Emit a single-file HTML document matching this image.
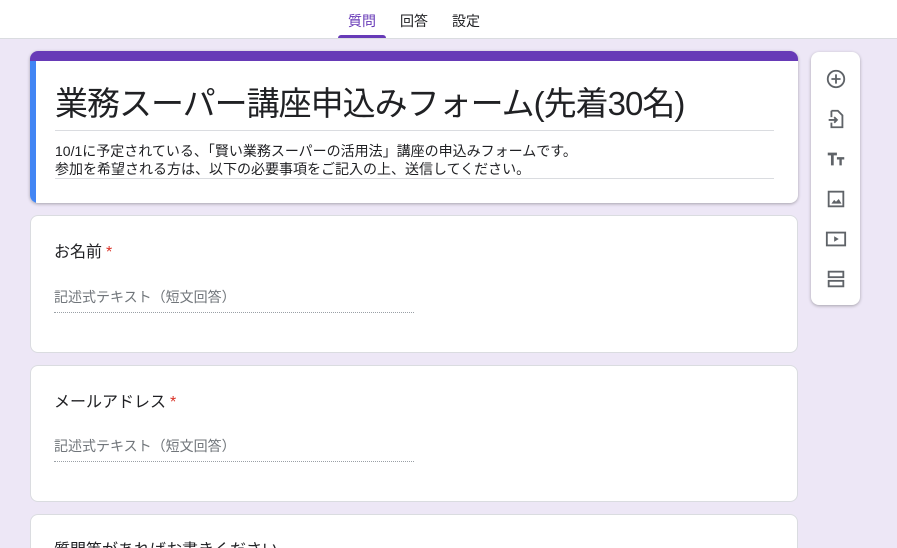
<!DOCTYPE html>
<html><head><meta charset="utf-8"><style>
html,body{margin:0;width:897px;height:548px;overflow:hidden}
body{background:#ede7f6;font-family:"Liberation Sans","Noto Sans CJK JP",sans-serif;position:relative}
.hdr{position:absolute;left:0;top:0;width:897px;height:38px;background:#fff;border-bottom:1px solid #dadce0}
.tab{position:absolute;top:11px;font-size:14px;color:#202124}
.card{position:absolute;left:30px;width:768px;background:#fff;border:1px solid #dadce0;border-radius:8px;box-sizing:border-box}
.q{position:absolute;left:23px;font-size:16px;color:#202124}
.q b{color:#d93025;font-weight:normal;margin-left:4px}
.ph{position:absolute;left:23px;font-size:14px;color:#70757a;width:360px;border-bottom:1px dotted #9aa0a6;padding-bottom:5px}
.tb{position:absolute;left:811px;top:52px;width:49px;height:253px;background:#fff;border-radius:8px;box-shadow:0 1px 3px rgba(0,0,0,.3)}
.tb svg{position:absolute;left:14px}
</style></head><body>
<div class="hdr">
<div class="tab" style="left:348px;color:#673ab7">質問</div>
<div class="tab" style="left:400px">回答</div>
<div class="tab" style="left:452px">設定</div>
<div style="position:absolute;left:338px;top:35px;width:48px;height:3px;background:#673ab7;border-radius:3px 3px 0 0"></div>
</div>
<div class="card" style="top:51px;height:152px;border:none;box-shadow:0 1px 3px rgba(0,0,0,.3);overflow:hidden">
<div style="position:absolute;left:0;top:0;width:100%;height:10px;background:#673ab7"></div>
<div style="position:absolute;left:0;top:10px;width:6px;height:142px;background:#4285f4"></div>
<div style="position:absolute;left:25px;top:26px;font-size:33px;color:#202124;letter-spacing:-1px;white-space:nowrap">業務スーパー講座申込みフォーム(先着30名)</div>
<div style="position:absolute;left:25px;top:79px;width:719px;border-top:1px solid #dadce0"></div>
<div style="position:absolute;left:25px;top:91px;font-size:14px;line-height:18px;color:#202124;white-space:nowrap">10/1に予定されている、「賢い業務スーパーの活用法」講座の申込みフォームです。<br>参加を希望される方は、以下の必要事項をご記入の上、送信してください。</div>
<div style="position:absolute;left:25px;top:127px;width:719px;border-top:1px solid #dadce0"></div>
</div>
<div class="card" style="top:215px;height:138px">
<div class="q" style="top:22px">お名前<b>*</b></div>
<div class="ph" style="top:71px">記述式テキスト（短文回答）</div>
</div>
<div class="card" style="top:365px;height:137px">
<div class="q" style="top:22px">メールアドレス<b>*</b></div>
<div class="ph" style="top:70px">記述式テキスト（短文回答）</div>
</div>
<div class="card" style="top:514px;height:60px">
<div class="q" style="top:21px">質問等があればお書きください</div>
</div>
<div class="tb">
<svg style="top:16px" width="22" height="22" viewBox="0 0 24 24" fill="none" stroke="#5f6368" stroke-width="2"><circle cx="12" cy="12" r="9"/><path d="M12 7v10M7 12h10"/></svg>
<svg style="top:56px" width="22" height="22" viewBox="0 0 24 24" fill="none" stroke="#5f6368" stroke-width="2"><path d="M7 3h7l5 5v13H7v-5M7 10V3"/><path d="M4 13h9M10 10l3 3-3 3"/></svg>
<svg style="top:96px" width="22" height="22" viewBox="0 0 24 24" fill="#5f6368"><path d="M3 5h10v3H9.5v11h-3V8H3zM13 10h8v2.5h-2.7V19h-2.6v-6.5H13z"/></svg>
<svg style="top:136px" width="22" height="22" viewBox="0 0 24 24" fill="none" stroke="#5f6368" stroke-width="2"><rect x="4" y="4" width="16" height="16"/><path d="M7 17l3-4 2 2 3-3 3 5z" fill="#5f6368" stroke="none"/></svg>
<svg style="top:176px" width="22" height="22" viewBox="0 0 24 24" fill="none" stroke="#5f6368" stroke-width="2"><rect x="2" y="5" width="20" height="14"/><path d="M10 9v6l5-3z" fill="#5f6368" stroke="none"/></svg>
<svg style="top:216px" width="22" height="22" viewBox="0 0 24 24" fill="none" stroke="#5f6368" stroke-width="2"><rect x="4" y="4" width="16" height="6"/><rect x="4" y="14" width="16" height="6"/></svg>
</div>
</body></html>
